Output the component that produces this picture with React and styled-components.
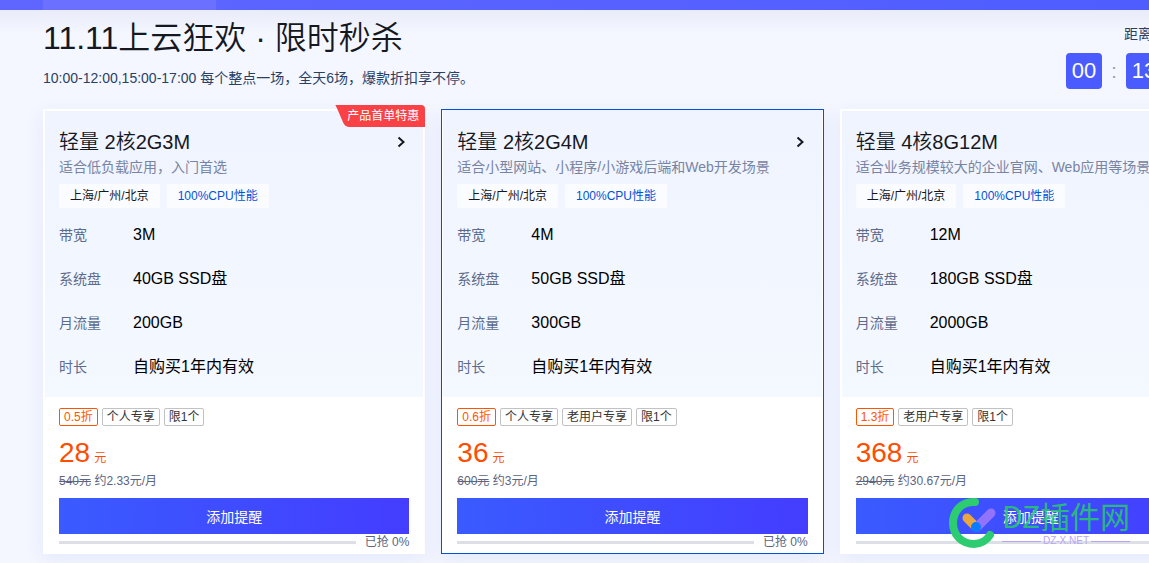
import React from "react";
import styled, { createGlobalStyle, css } from "styled-components";

const GlobalStyle = createGlobalStyle`
  *, *::before, *::after {
    box-sizing: border-box;
  }
  body {
    margin: 0;
    overflow: hidden;
    background: #f4f7ff;
    color: #16181f;
    font-family: "Liberation Sans", Arial, "Noto Sans CJK SC", sans-serif;
    font-size: 14px;
  }
  h1, h2, p, ul, dl, dd {
    margin: 0;
    padding: 0;
  }
`;

const Page = styled.div`
  position: relative;
  min-height: 100vh;
  overflow: hidden;
`;
const TabBar = styled.nav`
  display: flex;
  height: 10px;
  padding-left: 43px;
  background: linear-gradient(90deg, #5f66ff, #4f5dff);
`;
const Tab = styled.a`
  width: 173px;
  background: #6b70ff;
`;
const Section = styled.main`
  padding: 8px 43px 32px;
  background: linear-gradient(180deg, #e9ecf9 0, #f4f7ff 24px);
`;
const Inner = styled.div`
  min-width: 1179px;
`;
const Header = styled.header`
  display: flex;
  justify-content: space-between;
  margin-bottom: 20px;
`;
const Title = styled.h1`
  font-size: 32px;
  font-weight: 350;
  line-height: 40px;
`;
const Subtitle = styled.p`
  margin-top: 10px;
  color: #2a3f66;
  line-height: 20px;
`;
const Countdown = styled.div`
  padding-top: 6px;
  text-align: right;
  color: #2a3f66;
  line-height: 20px;
`;
const Clock = styled.div`
  display: flex;
  margin-top: 9px;
`;
const Digits = styled.span`
  width: 36px;
  height: 36px;
  border-radius: 4px;
  background: #4a5cff;
  color: #fff;
  font-size: 22px;
  line-height: 36px;
  text-align: center;
`;
const Colon = styled.span`
  width: 24px;
  color: #97a0b8;
  font-size: 20px;
  line-height: 36px;
  text-align: center;
`;
const Cards = styled.div`
  display: grid;
  grid-template-columns: repeat(3, 1fr);
  gap: 16px;
`;
const Card = styled.article`
  position: relative;
  border: 2px solid #fff;
  background: #fff;
  box-shadow: 0 6px 20px rgba(55, 70, 200, 0.08);
  ${({ $active }) => $active && css`
    border-width: 1px;
    border-color: #0052d9;
    padding: 0 1px 1px;
  `}
`;
const Ribbon = styled.span`
  position: absolute;
  top: -6px;
  right: -2px;
  width: 90px;
  height: 22px;
  padding-right: 6px;
  border-radius: 0 4px 0 0;
  background: #fa4146;
  clip-path: path("M0 0H90V22H14Q10 22 8 18L2 4Z");
  color: #fff;
  font-size: 12px;
  line-height: 22px;
  text-align: right;
`;
const Top = styled.div`
  padding: ${({ $active }) => ($active ? "20px" : "19px")} 14px 18px;
  background: linear-gradient(180deg, #f0f4ff, #f4f8ff);
`;
const Name = styled.h2`
  display: flex;
  justify-content: space-between;
  align-items: center;
  font-size: 20px;
  font-weight: 350;
  line-height: 24px;
`;
const Arrow = styled.svg`
  width: 16px;
  height: 16px;
  fill: none;
  stroke: #16181f;
  stroke-width: 2;
`;
const Description = styled.p`
  margin-top: 3px;
  color: #7884a3;
  line-height: 20px;
  white-space: nowrap;
`;
const Tags = styled.div`
  display: flex;
  gap: 7px;
  margin-top: 7px;
`;
const Tag = styled.span`
  padding: 0 11px;
  border-radius: 2px;
  background: #fbfcff;
  color: ${({ $blue }) => ($blue ? "#0052d9" : "#16181f")};
  font-size: 12px;
  line-height: 24px;
`;
const Specs = styled.dl`
  display: grid;
  grid-template-columns: 74px 1fr;
  grid-auto-rows: 24px;
  row-gap: 20px;
  margin-top: 15px;
  line-height: 24px;
`;
const SpecLabel = styled.dt`
  color: #5c6b8c;
`;
const SpecValue = styled.dd`
  color: #000;
  font-size: 16px;
`;
const Bottom = styled.div`
  padding: 11px 14px 2px;
`;
const Badges = styled.div`
  display: flex;
  gap: 4px;
`;
const Badge = styled.span`
  padding: 0 4px;
  border: 1px solid ${({ $hot }) => ($hot ? "#ff5500" : "#c0c2c6")};
  border-radius: 2px;
  color: ${({ $hot }) => ($hot ? "#ff5500" : "#333")};
  font-size: 12px;
  line-height: 16px;
`;
const Price = styled.p`
  margin-top: 12px;
  color: #ff4d00;
  font-size: 12px;
  line-height: 30px;
`;
const Amount = styled.span`
  margin-right: 4px;
  font-size: 28px;
`;
const Average = styled.p`
  color: #5c6480;
  font-size: 12px;
  line-height: 16px;
`;
const Remind = styled.button`
  display: block;
  width: 100%;
  height: 36px;
  margin-top: 9px;
  padding: 0;
  border: 0;
  background: linear-gradient(90deg, #3a5bff, #443dff);
  color: #fff;
  font-family: inherit;
  font-size: 14px;
`;
const Stock = styled.div`
  display: flex;
  align-items: center;
  gap: 9px;
  color: #5c6480;
  font-size: 12px;
  line-height: 16px;
`;
const Track = styled.span`
  flex: 1;
  height: 3px;
  background: #dcdfe6;
`;
const Fill = styled.span`
  display: block;
  height: 100%;
  background: #ff4d00;
`;
const Watermark = styled.div`
  position: absolute;
  top: 496px;
  right: 19px;
  display: flex;
  align-items: center;
  gap: 5px;
  pointer-events: none;
`;
const WatermarkLogo = styled.svg`
  width: 48px;
  height: 54px;
`;
const WatermarkName = styled.div`
  margin-bottom: 6px;
  color: rgba(38, 205, 105, 0.85);
  font-family: "Noto Sans CJK SC", sans-serif;
  font-size: 30px;
  font-weight: 400;
  line-height: 30px;
`;
const WatermarkSite = styled.div`
  display: flex;
  align-items: center;
  gap: 2px;
  color: #b9a4f7;
  font-size: 10px;
  line-height: 10px;

  &::before, &::after {
    content: "";
    flex: 1;
    height: 1px;
    background: #b9a4f7;
  }
`;

const plans = [
  {
    name: "轻量 2核2G3M",
    description: "适合低负载应用，入门首选",
    specs: [["带宽", "3M"], ["系统盘", "40GB SSD盘"], ["月流量", "200GB"], ["时长", "自购买1年内有效"]],
    badges: ["0.5折", "个人专享", "限1个"],
    price: 28,
    oldPrice: 540,
    average: "2.33",
    sold: 0,
    ribbon: "产品首单特惠"
  },
  {
    name: "轻量 2核2G4M",
    description: "适合小型网站、小程序/小游戏后端和Web开发场景",
    specs: [["带宽", "4M"], ["系统盘", "50GB SSD盘"], ["月流量", "300GB"], ["时长", "自购买1年内有效"]],
    badges: ["0.6折", "个人专享", "老用户专享", "限1个"],
    price: 36,
    oldPrice: 600,
    average: "3",
    sold: 0,
    active: true
  },
  {
    name: "轻量 4核8G12M",
    description: "适合业务规模较大的企业官网、Web应用等场景",
    specs: [["带宽", "12M"], ["系统盘", "180GB SSD盘"], ["月流量", "2000GB"], ["时长", "自购买1年内有效"]],
    badges: ["1.3折", "老用户专享", "限1个"],
    price: 368,
    oldPrice: 2940,
    average: "30.67",
    sold: 0
  }
];

function PlanCard ({plan}) {
  return(
    <Card $active={plan.active}>
      {plan.ribbon ? <Ribbon>{plan.ribbon}</Ribbon> : null}
      <Top $active={plan.active}>
        <Name>
          {plan.name}
          <Arrow viewBox="0 0 16 16"><path d="M5.5 3.5L10.5 8L5.5 12.5"/></Arrow>
        </Name>
        <Description>{plan.description}</Description>
        <Tags>
          <Tag>上海/广州/北京</Tag>
          <Tag $blue>100%CPU性能</Tag>
        </Tags>
        <Specs>
          {
            plan.specs.map(([label, value]) => (
              <React.Fragment key={label}>
                <SpecLabel>{label}</SpecLabel>
                <SpecValue>{value}</SpecValue>
              </React.Fragment>
            ))
          }
        </Specs>
      </Top>
      <Bottom>
        <Badges>
          {plan.badges.map((badge, i) => <Badge key={badge} $hot={i === 0}>{badge}</Badge>)}
        </Badges>
        <Price><Amount>{plan.price}</Amount>元</Price>
        <Average><del>{plan.oldPrice}元</del> 约{plan.average}元/月</Average>
        <Remind type="button">添加提醒</Remind>
        <Stock>
          <Track><Fill style={{width: `${plan.sold}%`}}/></Track>
          <span>已抢 {plan.sold}%</span>
        </Stock>
      </Bottom>
    </Card>
  );
}

function App () {
  return(
    <Page>
      <GlobalStyle/>
      <TabBar>
        <Tab href="#seckill" aria-label="限时秒杀"/>
      </TabBar>
      <Section id="seckill">
        <Inner>
          <Header>
            <div>
              <Title>11.11上云狂欢 · 限时秒杀</Title>
              <Subtitle>10:00-12:00,15:00-17:00 每个整点一场，全天6场，爆款折扣享不停。</Subtitle>
            </div>
            <Countdown>
              距离本场开始：
              <Clock>
                <Digits>00</Digits>
                <Colon>:</Colon>
                <Digits>13</Digits>
                <Colon>:</Colon>
                <Digits>25</Digits>
              </Clock>
            </Countdown>
          </Header>
          <Cards>
            {plans.map((plan) => <PlanCard key={plan.name} plan={plan}/>)}
          </Cards>
        </Inner>
      </Section>
      <Watermark>
        <WatermarkLogo viewBox="0 0 48 54">
          <path d="M26 6C13 5 4 15 4 27C4 40 14 48 25 48C32 48 38 44 41 39" fill="none" stroke="#2ecc71" strokeWidth="8" strokeLinecap="round"/>
          <path d="M18 22L27 31" fill="none" stroke="#eba63f" strokeWidth="9" strokeLinecap="round"/>
          <path d="M28 31L42 17" fill="none" stroke="#9274fb" strokeWidth="9" strokeLinecap="round"/>
          <circle cx="27" cy="31" r="5" fill="#0a7cff"/>
        </WatermarkLogo>
        <div>
          <WatermarkName>DZ插件网</WatermarkName>
          <WatermarkSite>DZ-X.NET</WatermarkSite>
        </div>
      </Watermark>
    </Page>
  );
}

export default App;
